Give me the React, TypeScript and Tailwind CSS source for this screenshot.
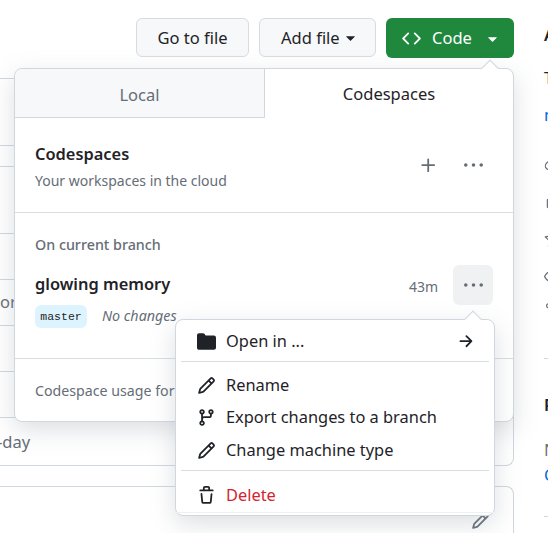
import { GoEye, GoLink, GoRepoForked, GoSquare, GoStar } from 'react-icons/go';

const rowHeights = [67, 21, 67, 46, 46, 46, 46, 48];

// octicons 16px paths, shown at 19px like the zoomed page
const paths = {
  arrowRight: 'M8.22 2.97a.75.75 0 0 1 1.06 0l4.25 4.25a.75.75 0 0 1 0 1.06l-4.25 4.25a.751.751 0 0 1-1.042-.018.751.751 0 0 1-.018-1.042l2.97-2.97H3.75a.75.75 0 0 1 0-1.5h7.44L8.22 4.03a.75.75 0 0 1 0-1.06Z',
  plus: 'M7.75 2a.75.75 0 0 1 .75.75V7h4.25a.75.75 0 0 1 0 1.5H8.5v4.25a.75.75 0 0 1-1.5 0V8.5H2.75a.75.75 0 0 1 0-1.5H7V2.75A.75.75 0 0 1 7.75 2Z',
  kebab: 'M8 9a1.5 1.5 0 1 0 0-3 1.5 1.5 0 0 0 0 3ZM1.5 9a1.5 1.5 0 1 0 0-3 1.5 1.5 0 0 0 0 3Zm13 0a1.5 1.5 0 1 0 0-3 1.5 1.5 0 0 0 0 3Z',
  pencil: 'M11.013 1.427a1.75 1.75 0 0 1 2.474 0l1.086 1.086a1.75 1.75 0 0 1 0 2.474l-8.61 8.61c-.21.21-.47.364-.756.445l-3.251.93a.75.75 0 0 1-.927-.928l.929-3.25c.081-.286.235-.547.445-.758l8.61-8.61Zm.176 4.823L9.75 4.81l-6.286 6.287a.253.253 0 0 0-.064.108l-.558 1.953 1.953-.558a.253.253 0 0 0 .108-.064Zm1.238-3.763a.25.25 0 0 0-.354 0L10.811 3.75l1.439 1.44 1.263-1.263a.25.25 0 0 0 0-.354Z',
  branch: 'M9.5 3.25a2.25 2.25 0 1 1 3 2.122V6A2.5 2.5 0 0 1 10 8.5H6a1 1 0 0 0-1 1v1.128a2.251 2.251 0 1 1-1.5 0V5.372a2.25 2.25 0 1 1 1.5 0v1.836A2.493 2.493 0 0 1 6 7h4a1 1 0 0 0 1-1v-.628A2.25 2.25 0 0 1 9.5 3.25Zm-6 0a.75.75 0 1 0 1.5 0 .75.75 0 0 0-1.5 0Zm8.25-.75a.75.75 0 1 0 0 1.5.75.75 0 0 0 0-1.5ZM4.25 12a.75.75 0 1 0 0 1.5.75.75 0 0 0 0-1.5Z',
  trash: 'M11 1.75V3h2.25a.75.75 0 0 1 0 1.5H2.75a.75.75 0 0 1 0-1.5H5V1.75C5 .784 5.784 0 6.75 0h2.5C10.216 0 11 .784 11 1.75ZM4.496 6.675l.66 6.6a.25.25 0 0 0 .249.225h5.19a.25.25 0 0 0 .249-.225l.66-6.6a.75.75 0 0 1 1.492.149l-.66 6.6A1.748 1.748 0 0 1 10.595 15h-5.19a1.75 1.75 0 0 1-1.741-1.575l-.66-6.6a.75.75 0 1 1 1.492-.15ZM6.5 1.75V3h3V1.75a.25.25 0 0 0-.25-.25h-2.5a.25.25 0 0 0-.25.25Z',
  code: 'm11.28 3.22 4.25 4.25a.75.75 0 0 1 0 1.06l-4.25 4.25a.749.749 0 0 1-1.275-.326.749.749 0 0 1 .215-.734L13.94 8l-3.72-3.72a.749.749 0 0 1 .326-1.275.749.749 0 0 1 .734.215Zm-6.56 0a.751.751 0 0 1 1.042.018.751.751 0 0 1 .018 1.042L2.06 8l3.72 3.72a.749.749 0 0 1-.326 1.275.749.749 0 0 1-.734-.215L.47 8.53a.75.75 0 0 1 0-1.06Z',
  folder: 'M1.75 1A1.75 1.75 0 0 0 0 2.75v10.5C0 14.216.784 15 1.75 15h12.5A1.75 1.75 0 0 0 16 13.25v-8.5A1.75 1.75 0 0 0 14.25 3H7.5a.25.25 0 0 1-.2-.1l-.9-1.2C6.07 1.26 5.55 1 5 1H1.75Z',
  caret: 'm4.427 7.427 3.396 3.396a.25.25 0 0 0 .354 0l3.396-3.396A.25.25 0 0 0 11.396 7H4.604a.25.25 0 0 0-.177.427Z',
};

function Octicon({ name, className }: { name: keyof typeof paths; className?: string }) {
  return (
    <svg viewBox="0 0 16 16" width={19} height={19} fill="currentColor" className={`shrink-0 ${className ?? ''}`}>
      <path d={paths[name]} />
    </svg>
  );
}

function FileTable() {
  return (
    <div className="mt-[20px] h-[388px] overflow-hidden rounded-br-lg border-r border-b border-[#d0d7de]">
      {rowHeights.map((h, i) => (
        <div key={i} className="flex items-center overflow-hidden border-t border-[#d0d7de] text-[16.5px] text-[#656d76]" style={{ height: h }}>
          {i === 4 && <span>or</span>}
          {i === 7 && <span className="-ml-[3px] mt-[2px]">-day</span>}
        </div>
      ))}
    </div>
  );
}

function Sidebar() {
  return (
    <aside className="w-[60px] shrink-0 text-[16.5px] text-[#1f2328]">
      <p className="mt-[23px] h-[27px] font-semibold">About</p>
      <p className="mt-[16px] h-[37px]">The</p>
      <p className="h-[32px] text-[#0969da]">memory</p>
      <div className="mt-[17px] flex flex-col gap-[18px] text-[#656d76]">
        <GoLink size={19} />
        <GoSquare size={19} className="mt-[5px] -ml-[2px]" />
        <GoStar size={19} className="-mt-[1px]" />
        <GoEye size={19} />
        <GoRepoForked size={19} className="-mt-[2px]" />
      </div>
      <div className="mt-[37px] h-px bg-[#d0d7de]" />
      <p className="mt-[34px] font-semibold">Releases</p>
      <p className="mt-[20px] text-[#656d76]">No</p>
      <p className="text-[#0969da]">Create</p>
      <div className="mt-[29px] h-px bg-[#d0d7de]" />
    </aside>
  );
}

function MenuItem({ icon, label, danger, trailing }: { icon: keyof typeof paths; label: string; danger?: boolean; trailing?: React.ReactNode }) {
  return (
    <div className={`flex h-[32.5px] items-center px-[21px] text-[16.4px] ${danger ? 'text-[#d1242f]' : 'text-[#1f2328]'}`}>
      <span className="flex w-[29px] text-[#1f2328]">
        <Octicon name={icon} />
      </span>
      <span className="flex-1">{label}</span>
      {trailing}
    </div>
  );
}

function RowMenu() {
  return (
    <div className="absolute left-[175px] top-[319px] w-[320px] rounded-lg border border-[#d0d7de] bg-white shadow-[0_8px_24px_rgba(140,149,159,0.3)]">
      <span className="absolute -top-[7px] right-[15px] h-3 w-3 rotate-45 border-t border-l border-[#d0d7de] bg-white" />
      <div className="pt-[5px] pb-[3px]">
        <MenuItem icon="folder" label="Open in ..." trailing={<Octicon name="arrowRight" className="-mr-[2px]" />} />
      </div>
      <div className="mx-[5px] h-px bg-[#d8dee4]" />
      <div className="pt-[7.5px] pb-[3px]">
        <MenuItem icon="pencil" label="Rename" />
        <MenuItem icon="branch" label="Export changes to a branch" />
        <MenuItem icon="pencil" label="Change machine type" />
      </div>
      <div className="mx-[5px] h-px bg-[#d8dee4]" />
      <div className="pt-[9px]">
        <MenuItem icon="trash" label="Delete" danger />
      </div>
      <div className="h-[3px] border-t border-[#eef1f4]" />
    </div>
  );
}

function CodePopover() {
  return (
    <div className="absolute left-[14px] top-[68px] h-[354px] w-[500px] rounded-lg border border-[#d0d7de] bg-white shadow-[0_8px_24px_rgba(140,149,159,0.3)]">
      <span className="absolute -top-[7px] right-[17px] h-3 w-3 rotate-45 border-t border-l border-[#d0d7de] bg-white" />
      <div className="relative flex h-[49px] text-[16.5px]">
        <div className="flex w-[250px] items-center justify-center rounded-tl-lg border-r border-b border-[#d0d7de] bg-[#f6f8fa] pt-[5px] text-[#656d76]">Local</div>
        <div className="flex flex-1 items-center justify-center pt-[2px] text-[#1f2328]">Codespaces</div>
      </div>
      <div className="flex h-[95px] items-center justify-between border-b border-[#d8dee4] pl-[20px] pr-[30px]">
        <div className="mt-[3px]">
          <h3 className="text-[16.4px] font-semibold leading-[24px] text-[#1f2328]">Codespaces</h3>
          <p className="mt-[5px] text-[14px] leading-[20px] text-[#656d76]">Your workspaces in the cloud</p>
        </div>
        <div className="flex items-center gap-[26px] text-[#656d76]">
          <Octicon name="plus" />
          <Octicon name="kebab" />
        </div>
      </div>
      <div className="h-[145px] px-[20px] pt-[22px]">
        <p className="text-[14.3px] font-medium leading-[20px] text-[#656d76]">On current branch</p>
        <div className="mt-[10px] flex items-start justify-between">
          <div>
            <p className="mt-[7px] text-[16.4px] font-semibold leading-[24px] text-[#1f2328]">glowing memory</p>
            <div className="mt-[9px] flex items-center gap-[15px]">
              <span className="flex h-[23px] w-[52px] items-center justify-center rounded-md bg-[#ddf4ff] font-['Liberation_Mono',monospace] text-[11.5px] text-[#1f2328]">master</span>
              <span className="-mt-[2px] text-[14.3px] italic text-[#656d76]">No changes</span>
            </div>
          </div>
          <div className="flex items-center gap-[15px]">
            <span className="mt-[2px] text-[14px] text-[#656d76]">43m</span>
            <span className="flex h-10 w-10 items-center justify-center rounded-md bg-[#f0f1f3] text-[#656d76]">
              <Octicon name="kebab" />
            </span>
          </div>
        </div>
      </div>
      <div className="border-t border-[#d8dee4] px-[20px] pt-[22px] text-[14.2px] leading-[20px] text-[#656d76]">Codespace usage for this repository is paid for by you</div>
    </div>
  );
}

export default function App() {
  return (
    <div className="relative h-[533px] w-[548px] overflow-hidden bg-white font-['Noto_Sans',sans-serif]">
      <div className="flex gap-[30px]">
        <main className="w-[514px] shrink-0">
          <div className="flex justify-end gap-[10px] pt-[18px] text-[16.5px] text-[#1f2328]">
            <button className="flex h-[39px] w-[113px] items-center justify-center rounded-md border border-[#d7dce1] bg-[#f6f8fa] pt-[2px]">Go to file</button>
            <button className="flex h-[39px] w-[117px] items-center rounded-md border border-[#d7dce1] bg-[#f6f8fa] pl-[21px]">
              <span className="pt-[2px]">Add file</span>
              <Octicon name="caret" className="ml-[1px] -mt-[1px]" />
            </button>
            <button className="flex h-[40px] w-[128px] items-center rounded-md bg-[#1f883d] pl-[16px] pr-[12px] text-white">
              <Octicon name="code" />
              <span className="ml-[11px] flex-1 pt-[1px] text-left">Code</span>
              <Octicon name="caret" />
            </button>
          </div>
          <FileTable />
          <div className="mt-[20px] flex h-[60px] justify-end rounded-tr-lg border-t border-r border-[#d0d7de] pt-[24px] pr-[23px] text-[#656d76]">
            <Octicon name="pencil" />
          </div>
        </main>
        <Sidebar />
      </div>
      <CodePopover />
      <RowMenu />
    </div>
  );
}
